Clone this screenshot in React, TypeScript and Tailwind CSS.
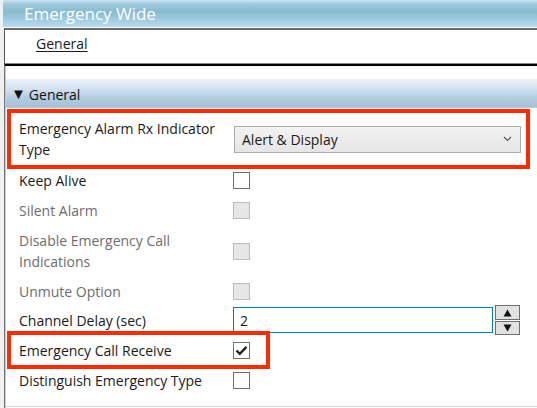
import React from "react";

const Check = ({ checked = false, disabled = false }: { checked?: boolean; disabled?: boolean }) => (
  <div
    className={
      "w-[17px] h-[17px] border flex items-center justify-center " +
      (disabled ? "bg-[#e6e6e6] border-[#bcbcbc]" : "bg-white border-[#707070]")
    }
  >
    {checked && (
      <svg width="13" height="11" viewBox="0 0 13 11">
        <path d="M1.5 5.5 L4.8 8.8 L11.5 1.8" fill="none" stroke="#222" strokeWidth="2.4" />
      </svg>
    )}
  </div>
);

export default function App() {
  return (
    <div
      className="w-[537px] h-[408px] bg-white relative overflow-hidden flex flex-col text-[14px] text-[#1a1a1a]"
      style={{ fontFamily: '"Open Sans", "Noto Sans", sans-serif' }}
    >
      {/* Title bar */}
      <div className="flex h-[27px] shrink-0">
        <div className="w-[3px] bg-[#eef2f5]" />
        <div className="flex-1 bg-[linear-gradient(#cfe4f4_0%,#9ec9dc_15%,#86bccd_45%,#a8d0e6_80%,#b8dbf0_100%)] flex items-center pl-[21px] text-white text-[17px]">
          Emergency Wide
        </div>
      </div>
      <div className="h-px bg-white shrink-0" />
      {/* Tabs */}
      <div className="flex shrink-0">
        <div className="w-[4px] bg-[#f0f0f0]" />
        <div className="flex-1 border-l border-t-2 border-l-[#555] border-t-[#6a6a6a] h-[38px] flex flex-col">
          <div className="flex-1 flex items-start pt-[4px] leading-[20px] pl-[31px]">
            <span className="underline underline-offset-2">General</span>
          </div>
          <div className="h-px bg-[#888]" />
          <div className="h-[2px] bg-black" />
        </div>
      </div>
      {/* body */}
      <div className="flex flex-1">
        <div className="w-[4px] bg-[#f0f0f0]" />
        <div className="flex-1 border-l border-l-[#777] flex">
          <div className="w-[1px] bg-[#c8c8c8]" />
          <div className="flex-1 flex flex-col">
            <div className="h-[13px]" />
            <div className="h-[29px] bg-[linear-gradient(#eaf2fa_0%,#d2e2ef_35%,#b1cbdf_70%,#a3c1da_100%)] border-b border-b-[#c4c4c4] flex items-center pl-[5px] pt-[2px] text-[#111]">
              <span className="text-[15px] leading-none mr-[3px] mt-[-1px]">▼</span>
              <span>General</span>
            </div>
            <div className="flex-1 flex flex-col border-b border-b-[#d8d8d8] pt-[1px]">
              {/* Red box 1 */}
              <div className="ml-[1px] w-[523px] h-[60px] border-4 border-[#ff2a00] flex items-center">
                <div className="w-[223px] pl-[8px] leading-[21px]">
                  Emergency Alarm Rx Indicator
                  <br />
                  Type
                </div>
                <div className="w-[287px] h-[27px] border border-[#acacac] bg-[linear-gradient(#f2f2f2,#e6e6e6)] flex items-center pl-[7px] pr-[8px]">
                  <span className="flex-1">Alert &amp; Display</span>
                  <svg width="9" height="6" viewBox="0 0 9 6">
                    <path d="M1 1 L4.5 4.5 L8 1" fill="none" stroke="#555" strokeWidth="1.2" />
                  </svg>
                </div>
              </div>
              <Row h="h-[22px]" label="Keep Alive"><Check /></Row>
              <Row h="h-[38px]" label="Silent Alarm" disabled><Check disabled /></Row>
              <Row h="h-[44px]" label={<>Disable Emergency Call<br />Indications</>} disabled><Check disabled /></Row>
              <Row h="h-[36px]" label="Unmute Option" disabled><Check disabled /></Row>
              <div className="h-[22px] flex items-center">
                <div className="w-[227px] pl-[13px]">Channel Delay (sec)</div>
                <div className="w-[260px] h-[26px] border border-[#0078d7] bg-white flex items-center pl-[6px] shrink-0">2</div>
                <div className="ml-[2px] flex flex-col gap-[1px] shrink-0">
                  <div className="w-[25px] h-[15px] bg-[#e1e1e1] border border-[#707070] flex items-center justify-center">
                    <svg width="9" height="8" viewBox="0 0 9 8"><path d="M4.5 0.5 L8.5 7.5 L0.5 7.5 Z" fill="#111" /></svg>
                  </div>
                  <div className="w-[25px] h-[14px] bg-[#e1e1e1] border border-[#707070] flex items-center justify-center">
                    <svg width="9" height="8" viewBox="0 0 9 8"><path d="M0.5 0.5 L8.5 0.5 L4.5 7.5 Z" fill="#111" /></svg>
                  </div>
                </div>
              </div>
              <div className="ml-[1px] w-[263px] h-[38px] border-4 border-[#ff2a00] flex items-center">
                <div className="w-[222px] pl-[8px]">Emergency Call Receive</div>
                <Check checked />
              </div>
              <Row h="h-[22px]" label="Distinguish Emergency Type"><Check /></Row>
            </div>
            <div className="h-px" />
          </div>
        </div>
      </div>
    </div>
  );
}

function Row({
  h,
  label,
  disabled = false,
  children,
}: {
  h: string;
  label: React.ReactNode;
  disabled?: boolean;
  children: React.ReactNode;
}) {
  return (
    <div className={h + " flex items-center shrink-0"}>
      <div className={"w-[227px] pl-[13px] leading-[21px] " + (disabled ? "text-[#6d6d6d]" : "")}>{label}</div>
      {children}
    </div>
  );
}
